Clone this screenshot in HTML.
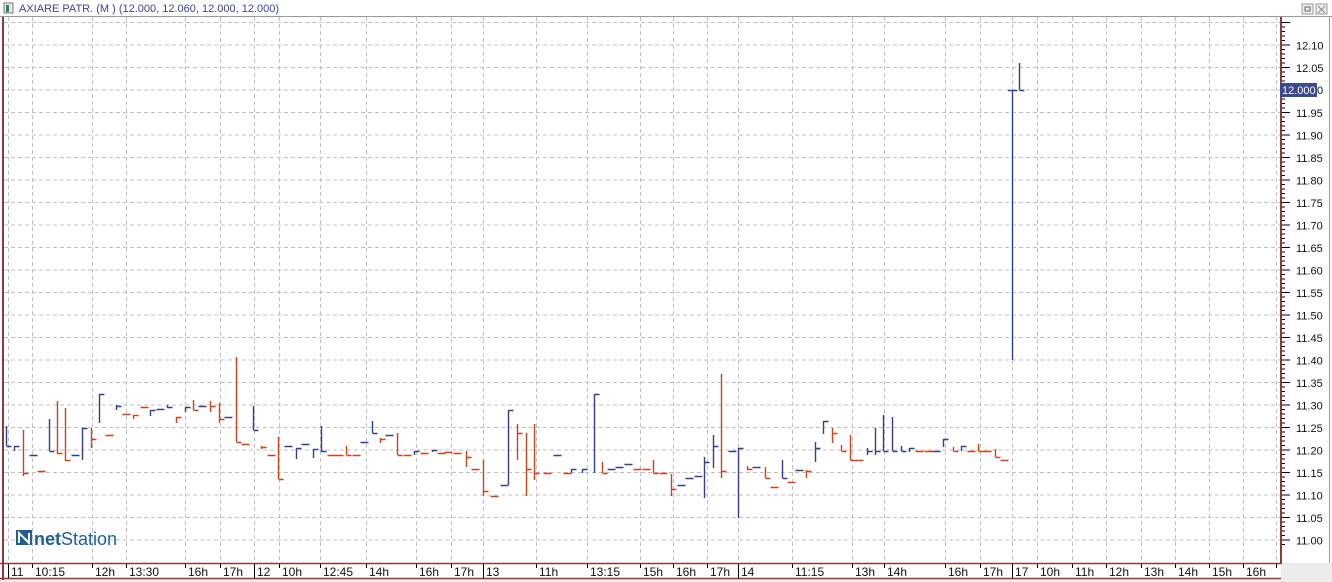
<!DOCTYPE html>
<html><head><meta charset="utf-8"><style>
body{margin:0;width:1332px;height:582px;overflow:hidden;background:#fff;font-family:"Liberation Sans",sans-serif;}
svg{display:block}
</style></head><body>
<svg id="s" width="1332" height="582" xmlns="http://www.w3.org/2000/svg" font-family="Liberation Sans, sans-serif">
<rect x="0" y="0" width="1332" height="582" fill="#fff"/>
<rect x="0" y="563" width="1332" height="19" fill="#ececec"/>
<rect x="0" y="564" width="1281" height="14" fill="#fff"/>
<rect x="1281" y="17" width="48" height="546" fill="#fff"/>
<g id="grid" stroke="#c0c0c0" stroke-dasharray="4,3" stroke-width="1"></g>
<g id="bars" stroke-width="1.4" fill="none"></g>
<line x1="0" y1="16.5" x2="1332" y2="16.5" stroke="#9a9a9a"/>
<rect x="4" y="3" width="9" height="10" fill="#e8e8e8" stroke="#777"/>
<rect x="6" y="5" width="3" height="7" fill="#2f7a6a"/>
<text x="19" y="12" font-size="11" fill="#3a4590">AXIARE PATR. (M ) (12.000, 12.060, 12.000, 12.000)</text>
<rect x="1302" y="4" width="11" height="10" fill="#eee" stroke="#999"/><rect x="1305" y="7" width="5" height="4" fill="none" stroke="#666"/>
<rect x="1316" y="4" width="11" height="10" fill="#eee" stroke="#999"/><path d="M1318 6l7 7M1325 6l-7 7" stroke="#888"/>
<line x1="3" y1="17" x2="3" y2="580" stroke="#8b3a3a" stroke-width="2"/>
<line x1="1281" y1="17" x2="1281" y2="564" stroke="#8b3a3a" stroke-width="2"/>
<line x1="0" y1="563.5" x2="1281" y2="563.5" stroke="#8b3a3a" stroke-width="1.5"/>
<line x1="0" y1="578.5" x2="1281" y2="578.5" stroke="#8b3a3a" stroke-width="1.5"/>
<line x1="1329.5" y1="17" x2="1329.5" y2="563" stroke="#999"/>
<g id="axis" font-size="11" fill="#111"></g>
<rect x="1280" y="83" width="37" height="14" fill="#3b4a8c"/>
<text x="1282" y="94" font-size="11" fill="#fff">12.000</text>
<text x="1317" y="94" font-size="11" fill="#111">0</text>
<rect x="16" y="530" width="16" height="15" fill="#1f5f95"/>
<path d="M19 543V533l10 10V533" stroke="#fff" stroke-width="2" fill="none"/>
<text x="34" y="545" font-size="18" fill="#1f5f95"><tspan font-weight="bold">net</tspan>Station</text>
</svg>
<script>
var NS="http://www.w3.org/2000/svg";
function el(p,t,a,txt){var e=document.createElementNS(NS,t);for(var k in a)e.setAttribute(k,a[k]);if(txt!==undefined)e.textContent=txt;p.appendChild(e);return e;}
var g=document.getElementById('grid');
for(var i=0;i<24;i++){var y=22+i*22.5;el(g,'line',{x1:4,y1:y+.5,x2:1280,y2:y+.5});}
var xl=[[8,'11',1],[32,'10:15'],[92,'12h'],[126,'13:30'],[185,'16h'],[220,'17h'],[254,'12',1],[279,'10h'],[320,'12:45'],[366,'14h'],[416,'16h'],[451,'17h'],[483,'13',1],[536,'11h'],[587,'13:15'],[640,'15h'],[673,'16h'],[707,'17h'],[738,'14',1],[792,'11:15'],[852,'13h'],[884,'14h'],[945,'16h'],[980,'17h'],[1012,'17',1],[1037,'10h'],[1072,'11h'],[1106,'12h'],[1141,'13h'],[1175,'14h'],[1209,'15h'],[1243,'16h'],[1276,'']];
var ax=document.getElementById('axis');
xl.forEach(function(a){el(g,'line',{x1:a[0]+.5,y1:17,x2:a[0]+.5,y2:563});
 el(ax,'line',{x1:a[0]+.5,y1:564,x2:a[0]+.5,y2:a[2]?578:568,stroke:'#000'});
 if(a[1])el(ax,'text',{x:a[0]+3,y:576,'font-size':12},a[1]);});
var pr=['12.10','12.05','12.00','11.95','11.90','11.85','11.80','11.75','11.70','11.65','11.60','11.55','11.50','11.45','11.40','11.35','11.30','11.25','11.20','11.15','11.10','11.05','11.00'];
for(var i=0;i<=116;i++){var y=22+i*4.5;var maj=i%5==0;el(ax,'line',{x1:1282,y1:y+.5,x2:maj?1290:1285,y2:y+.5,stroke:'#000'});}
pr.forEach(function(p,i){if(p!='12.00')el(ax,'text',{x:1296,y:49.5+i*22.5},p);});
var B='#353f8a',R='#c9441e';
var d=[[6,426,446,446,B],[14,446,451,446,B],[23,430,476,473,R],[32,455,455,455,B],[40,471,471,471,R],[49,419,451,451,B],[57,401,454,453,R],[65,408,461,460,R],[74,455,455,455,B],[82,428,460,428,B],[91,428,448,439,R],[99,394,423,394,B],[108,435,435,435,R],[116,405,410,406,B],[125,414,414,414,R],[133,415,419,415,R],[143,407,407,407,R],[150,410,416,410,B],[159,409,409,409,B],[167,405,408,407,B],[176,417,423,417,R],[185,407,412,407,B],[193,400,410,410,R],[201,406,406,406,B],[210,401,412,406,R],[219,403,423,419,R],[227,417,417,417,B],[236,357,442,442,R],[244,444,444,444,R],[253,406,430,430,B],[261,446,449,447,R],[270,455,455,455,R],[278,437,479,479,R],[287,446,446,446,B],[296,448,459,448,B],[304,444,444,444,B],[313,449,458,449,B],[321,426,452,451,B],[330,455,455,455,R],[338,455,455,455,R],[346,446,455,455,R],[355,455,455,455,R],[363,442,442,442,B],[372,421,433,433,B],[380,438,443,439,R],[388,435,435,435,B],[397,433,455,455,R],[406,455,455,455,R],[414,451,455,451,B],[423,453,453,453,R],[432,450,452,450,B],[440,453,453,453,R],[447,452,452,452,R],[456,453,453,453,R],[466,451,467,457,R],[474,469,469,469,R],[483,460,496,491,R],[493,496,496,496,R],[503,485,485,485,B],[508,410,485,410,B],[517,424,460,433,R],[526,433,496,469,R],[534,424,480,473,R],[546,473,473,473,R],[556,455,455,455,B],[566,473,473,473,R],[571,469,473,469,B],[582,469,473,469,B],[594,394,473,394,B],[602,462,473,473,R],[610,469,469,469,B],[618,467,467,467,B],[627,464,464,464,B],[636,469,469,469,R],[645,469,469,469,R],[653,460,473,473,R],[662,473,473,473,R],[671,474,496,489,R],[680,485,485,485,B],[688,478,478,478,B],[697,476,476,476,B],[704,457,498,462,B],[713,435,468,446,B],[721,374,478,471,R],[731,451,451,451,B],[738,448,518,448,B],[747,466,470,469,R],[755,467,467,467,B],[765,467,478,478,R],[773,487,487,487,R],[782,460,478,478,B],[790,482,482,482,R],[798,470,470,470,B],[806,470,478,471,R],[815,442,462,448,B],[823,421,434,421,B],[832,428,443,433,R],[841,445,451,451,R],[850,435,460,460,R],[858,460,460,460,R],[867,448,455,451,B],[875,428,455,451,B],[883,415,451,451,B],[892,417,451,451,B],[901,446,451,451,B],[909,448,452,448,B],[918,451,451,451,R],[927,451,451,451,R],[935,451,451,451,B],[943,439,447,439,B],[953,447,451,451,R],[961,446,451,446,B],[970,451,451,451,R],[978,444,451,451,R],[986,451,451,451,R],[995,449,457,457,R],[1003,460,460,460,R],[1012,90,360,90,B],[1019,63,90,90,B]];
var bg=document.getElementById('bars');
d.forEach(function(b){var x=b[0]+.5;var p='';if(b[2]-b[1]>1)p+='M'+x+' '+b[1]+'V'+b[2];else p+='M'+(x-3)+' '+(b[3]+.5)+'H'+x;p+='M'+x+' '+(b[3]+.5)+'H'+(x+5);el(bg,'path',{d:p,stroke:b[4]});});
el(bg,'path',{d:'M1008 90.5H1012',stroke:B});
</script>
</body></html>
